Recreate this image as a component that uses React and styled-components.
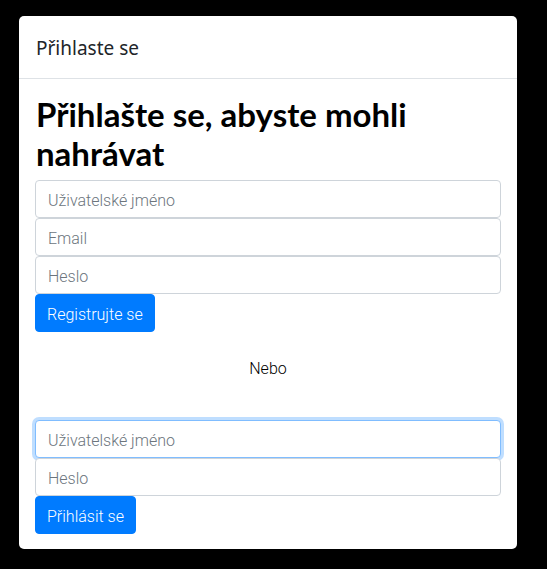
import React from 'react';
import styled, { createGlobalStyle } from 'styled-components';

const GlobalStyle = createGlobalStyle`
  html, body {
    margin: 0;
    padding: 0;
    background: #000;
  }
  body {
    font-family: "Noto Sans", "Open Sans", sans-serif;
    color: #212529;
  }
  * { box-sizing: border-box; }
`;

const App = () => {
  return (
    <>
      <GlobalStyle />
      <Page>
        <Card>
          <Header>
            <HeaderTitle>Přihlaste se</HeaderTitle>
          </Header>
          <Body>
            <Title>Přihlašte se, abyste mohli nahrávat</Title>
            <Form onSubmit={(e) => e.preventDefault()}>
              <Input type="text" placeholder="Uživatelské jméno" />
              <Input type="email" placeholder="Email" />
              <Input type="password" placeholder="Heslo" />
              <Button type="submit">Registrujte se</Button>
            </Form>
            <Divider>Nebo</Divider>
            <Form onSubmit={(e) => e.preventDefault()}>
              <Input type="text" placeholder="Uživatelské jméno" $active autoFocus />
              <Input type="password" placeholder="Heslo" />
              <Button type="submit">Přihlásit se</Button>
            </Form>
          </Body>
        </Card>
      </Page>
    </>
  );
};

export default App;

const Page = styled.div`
  min-height: 569px;
  padding: 16px 30px 20px 19px;
`;

const Card = styled.div`
  width: 498px;
  background: #fff;
  border-radius: 5px;
  overflow: hidden;
`;

const Header = styled.div`
  height: 63px;
  padding: 3px 17px 0;
  display: flex;
  align-items: center;
  border-bottom: 1px solid #dee2e6;
`;

const HeaderTitle = styled.h5`
  margin: 0;
  font-size: 19px;
  font-weight: 400;
  line-height: 1.5;
  color: #212529;
`;

const Body = styled.div`
  padding: 16px 16px 15px;
`;

const Title = styled.h2`
  margin: 0 0 8px 1px;
  font-family: Lato, "Noto Sans", sans-serif;
  font-size: 33px;
  font-weight: 700;
  line-height: 1.17;
  color: #000;
`;

const Form = styled.form`
  display: flex;
  flex-direction: column;
  align-items: flex-start;
`;

const Input = styled.input`
  width: 100%;
  height: 38px;
  padding: 7px 12px 5px;
  font-family: Roboto, "Noto Sans", sans-serif;
  font-size: 16px;
  font-weight: 300;
  color: #495057;
  background: #fff;
  border: 1px solid ${(p) => (p.$active ? '#80bdff' : '#ced4da')};
  border-radius: 4px;
  box-shadow: ${(p) => (p.$active ? '0 0 0 3px rgba(0, 123, 255, 0.25)' : 'none')};
  outline: none;

  &::placeholder {
    color: #6c757d;
  }
`;

const Button = styled.button`
  height: 38px;
  padding: 7px 11px 5px;
  font-family: Roboto, "Noto Sans", sans-serif;
  font-size: 16px;
  font-weight: 300;
  color: #fff;
  background: #007bff;
  border: 1px solid #007bff;
  border-radius: 4px;
  cursor: pointer;
`;

const Divider = styled.p`
  margin: 0;
  padding: 25px 0 39px;
  text-align: center;
  font-family: Roboto, "Noto Sans", sans-serif;
  font-size: 16px;
  font-weight: 300;
  line-height: 24px;
  color: #000;
`;
